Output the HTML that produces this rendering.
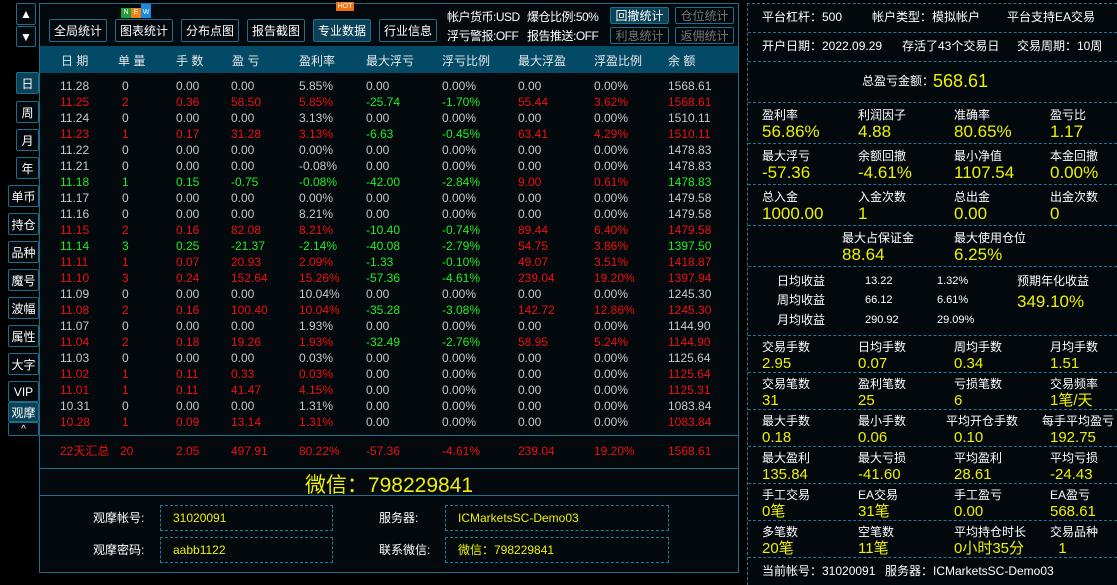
<!DOCTYPE html>
<html><head><meta charset="utf-8"><style>
*{margin:0;padding:0;box-sizing:border-box}
body{width:1117px;height:585px;background:#000;overflow:hidden;position:relative;font-family:"Liberation Sans","Noto Sans CJK SC",sans-serif;font-size:12px;color:#fff}
.a{position:absolute;white-space:nowrap}
.btn{position:absolute;border:1px solid #1a6f8c;border-radius:2px;background:#02080c;color:#fff;font-size:12px;display:flex;align-items:center;justify-content:center;white-space:nowrap}
.hl{background:#0b4258}
.dim{color:#777}
.g{color:#c8c8c8}.r{color:#ee1010}.gr{color:#22ee22}.y{color:#eef000}
.row{position:absolute;left:40px;height:16px;line-height:16px;font-size:12px;width:698px}
.row span{position:absolute;top:0;white-space:nowrap}
.hd{position:absolute;left:40px;top:46px;width:698px;height:27px;background:#034a66}
.hd span{position:absolute;top:6px;font-size:12px;color:#e8e8e8;white-space:nowrap}
.dl{position:absolute;left:748px;width:369px;border-top:1px dashed #1a7a9a}
.lb{position:absolute;font-size:12px;line-height:14px;color:#fff;white-space:nowrap}
.vl{position:absolute;font-size:16px;line-height:17px;color:#eef000;white-space:nowrap}
.box{position:absolute;border:1px dashed #1a7a9a;height:26px;line-height:24px;padding-left:12px;color:#eef000;font-size:12px;white-space:nowrap}
</style></head><body>
<div class="btn" style="left:16px;top:3px;width:20px;height:22px">▲</div>
<div class="btn" style="left:16px;top:26px;width:20px;height:21px">▼</div>
<div class="btn hl" style="left:16px;top:72px;width:23px;height:22px">日</div>
<div class="btn" style="left:16px;top:101px;width:23px;height:22px">周</div>
<div class="btn" style="left:16px;top:129px;width:23px;height:22px">月</div>
<div class="btn" style="left:16px;top:157px;width:23px;height:22px">年</div>
<div class="btn" style="left:8px;top:185px;width:31px;height:22px">单币</div>
<div class="btn" style="left:8px;top:213px;width:31px;height:22px">持仓</div>
<div class="btn" style="left:8px;top:241px;width:31px;height:22px">品种</div>
<div class="btn" style="left:8px;top:269px;width:31px;height:22px">魔号</div>
<div class="btn" style="left:8px;top:297px;width:31px;height:22px">波幅</div>
<div class="btn" style="left:8px;top:325px;width:31px;height:22px">属性</div>
<div class="btn" style="left:8px;top:353px;width:31px;height:22px">大字</div>
<div class="btn" style="left:8px;top:381px;width:31px;height:21px">VIP</div>
<div class="btn hl" style="left:8px;top:402px;width:31px;height:20px">观摩</div>
<div class="btn" style="left:8px;top:422px;width:31px;height:14px;font-size:10px">^</div>
<div class="a" style="left:39px;top:3px;width:700px;height:570px;border:1px solid #1a6f8c;background:#03090c"></div>
<div class="btn" style="left:49px;top:19px;width:58px;height:23px">全局统计</div>
<div class="btn" style="left:115px;top:19px;width:58px;height:23px">图表统计</div>
<div class="a" style="left:121px;top:8px;width:10px;height:10px;background:#1ea03c;font-size:7px;text-align:center;line-height:10px">N</div>
<div class="a" style="left:131px;top:8px;width:10px;height:10px;background:#f08010;font-size:7px;text-align:center;line-height:10px">E</div>
<div class="a" style="left:141px;top:4px;width:10px;height:14px;background:#1a8ae0;font-size:7px;text-align:center;line-height:18px">W</div>
<div class="btn" style="left:181px;top:19px;width:58px;height:23px">分布点图</div>
<div class="btn" style="left:247px;top:19px;width:58px;height:23px">报告截图</div>
<div class="btn hl" style="left:313px;top:19px;width:58px;height:23px">专业数据</div>
<div class="a" style="left:336px;top:2px;width:18px;height:9px;background:#f07010;font-size:7px;color:#fff;text-align:center;line-height:9px">HOT</div>
<div class="btn" style="left:379px;top:19px;width:58px;height:23px">行业信息</div>
<div class="a" style="left:447px;top:8px;font-size:12px;letter-spacing:-0.5px">帐户货币:USD</div>
<div class="a" style="left:527px;top:8px;font-size:12px;letter-spacing:-0.5px">爆仓比例:50%</div>
<div class="a" style="left:447px;top:27px;font-size:12px;letter-spacing:-0.5px">浮亏警报:OFF</div>
<div class="a" style="left:527px;top:27px;font-size:12px;letter-spacing:-0.5px">报告推送:OFF</div>
<div class="btn hl" style="left:610px;top:7px;width:59px;height:17px">回撤统计</div>
<div class="btn dim" style="left:675px;top:7px;width:59px;height:17px">仓位统计</div>
<div class="btn dim" style="left:610px;top:27px;width:59px;height:17px">利息统计</div>
<div class="btn dim" style="left:675px;top:27px;width:59px;height:17px">返佣统计</div>
<div class="hd"><span style="left:21px">日 期</span><span style="left:78px">单 量</span><span style="left:136px">手 数</span><span style="left:192px">盈 亏</span><span style="left:259px">盈利率</span><span style="left:326px">最大浮亏</span><span style="left:402px">浮亏比例</span><span style="left:478px">最大浮盈</span><span style="left:554px">浮盈比例</span><span style="left:628px">余 额</span></div>
<div id="rows"></div>
<div class="a" style="left:40px;top:435px;width:698px;border-top:1px solid #1a6f8c"></div>
<div class="row r" style="top:443px"><span style="left:20px">22天汇总</span><span style="left:80px">20</span><span style="left:136px">2.05</span><span style="left:191px">497.91</span><span style="left:259px">80.22%</span><span style="left:326px">-57.36</span><span style="left:402px">-4.61%</span><span style="left:478px">239.04</span><span style="left:554px">19.20%</span><span style="left:628px">1568.61</span></div>
<div class="a" style="left:40px;top:468px;width:698px;border-top:1px solid #1a6f8c"></div>
<div class="a y" style="left:40px;width:698px;top:469px;text-align:center;font-size:21px">微信：798229841</div>
<div class="a" style="left:40px;top:495px;width:698px;border-top:1px solid #1a6f8c"></div>
<div class="lb" style="left:93px;top:511px">观摩帐号:</div>
<div class="box" style="left:160px;top:505px;width:173px">31020091</div>
<div class="lb" style="left:93px;top:543px">观摩密码:</div>
<div class="box" style="left:160px;top:537px;width:173px">aabb1122</div>
<div class="lb" style="left:379px;top:511px">服务器:</div>
<div class="box" style="left:445px;top:505px;width:224px">ICMarketsSC-Demo03</div>
<div class="lb" style="left:379px;top:543px">联系微信:</div>
<div class="box" style="left:445px;top:537px;width:224px">微信：798229841</div>
<div class="a" style="left:747px;top:3px;width:370px;height:582px;border-left:1px dashed #1a7a9a;border-top:1px dashed #1a7a9a;background:#02080c"></div>
<div class="lb" style="left:762px;top:10px">平台杠杆：500</div>
<div class="lb" style="left:872px;top:10px">帐户类型：模拟帐户</div>
<div class="lb" style="left:1007px;top:10px">平台支持EA交易</div>
<div class="dl" style="top:32px"></div>
<div class="lb" style="left:762px;top:39px">开户日期：2022.09.29</div>
<div class="lb" style="left:902px;top:39px">存活了43个交易日</div>
<div class="lb" style="left:1017px;top:39px">交易周期：10周</div>
<div class="dl" style="top:61px"></div>
<div class="lb" style="left:862px;top:74px">总盈亏金额：</div>
<div class="vl" style="left:933px;top:71px;font-size:18px;line-height:20px">568.61</div>
<div class="dl" style="top:102px"></div>
<div id="grid"></div>
<div class="lb" style="left:777px;top:274px">日均收益</div><div class="lb" style="left:865px;top:274px;font-size:11px">13.22</div><div class="lb" style="left:937px;top:274px;font-size:11px">1.32%</div><div class="lb" style="left:1017px;top:274px">预期年化收益</div>
<div class="lb" style="left:777px;top:293px">周均收益</div><div class="lb" style="left:865px;top:293px;font-size:11px">66.12</div><div class="lb" style="left:937px;top:293px;font-size:11px">6.61%</div>
<div class="vl" style="left:1017px;top:293px;font-size:17px">349.10%</div>
<div class="lb" style="left:777px;top:313px">月均收益</div><div class="lb" style="left:865px;top:313px;font-size:11px">290.92</div><div class="lb" style="left:937px;top:313px;font-size:11px">29.09%</div>
<div class="lb" style="left:762px;top:564px">当前帐号：31020091</div>
<div class="lb" style="left:885px;top:564px">服务器：ICMarketsSC-Demo03</div>
<script>
var D=[
["11.28","0","0.00","0.00","5.85%","0.00","0.00%","0.00","0.00%","1568.61","g"],
["11.25","2","0.36","58.50","5.85%","-25.74","-1.70%","55.44","3.62%","1568.61","r"],
["11.24","0","0.00","0.00","3.13%","0.00","0.00%","0.00","0.00%","1510.11","g"],
["11.23","1","0.17","31.28","3.13%","-6.63","-0.45%","63.41","4.29%","1510.11","r"],
["11.22","0","0.00","0.00","0.00%","0.00","0.00%","0.00","0.00%","1478.83","g"],
["11.21","0","0.00","0.00","-0.08%","0.00","0.00%","0.00","0.00%","1478.83","g"],
["11.18","1","0.15","-0.75","-0.08%","-42.00","-2.84%","9.00","0.61%","1478.83","gr"],
["11.17","0","0.00","0.00","0.00%","0.00","0.00%","0.00","0.00%","1479.58","g"],
["11.16","0","0.00","0.00","8.21%","0.00","0.00%","0.00","0.00%","1479.58","g"],
["11.15","2","0.16","82.08","8.21%","-10.40","-0.74%","89.44","6.40%","1479.58","r"],
["11.14","3","0.25","-21.37","-2.14%","-40.08","-2.79%","54.75","3.86%","1397.50","gr"],
["11.11","1","0.07","20.93","2.09%","-1.33","-0.10%","49.07","3.51%","1418.87","r"],
["11.10","3","0.24","152.64","15.26%","-57.36","-4.61%","239.04","19.20%","1397.94","r"],
["11.09","0","0.00","0.00","10.04%","0.00","0.00%","0.00","0.00%","1245.30","g"],
["11.08","2","0.16","100.40","10.04%","-35.28","-3.08%","142.72","12.86%","1245.30","r"],
["11.07","0","0.00","0.00","1.93%","0.00","0.00%","0.00","0.00%","1144.90","g"],
["11.04","2","0.18","19.26","1.93%","-32.49","-2.76%","58.95","5.24%","1144.90","r"],
["11.03","0","0.00","0.00","0.03%","0.00","0.00%","0.00","0.00%","1125.64","g"],
["11.02","1","0.11","0.33","0.03%","0.00","0.00%","0.00","0.00%","1125.64","r"],
["11.01","1","0.11","41.47","4.15%","0.00","0.00%","0.00","0.00%","1125.31","r"],
["10.31","0","0.00","0.00","1.31%","0.00","0.00%","0.00","0.00%","1083.84","g"],
["10.28","1","0.09","13.14","1.31%","0.00","0.00%","0.00","0.00%","1083.84","r"]];
var X=[20,82,136,191,259,326,402,478,554,628],h="";
D.forEach(function(r,i){var c=r[10];h+='<div class="row" style="top:'+(78+i*16)+'px">';
for(var j=0;j<10;j++){var k=c;if(c!="g"){if(j==5||j==6)k=(r[j]=="0.00"||r[j]=="0.00%")?"g":"gr";if(j==7||j==8)k=(r[j]=="0.00"||r[j]=="0.00%")?"g":"r";}
h+='<span class="'+k+'" style="left:'+X[j]+'px">'+r[j]+'</span>';}h+='</div>';});
document.getElementById('rows').innerHTML=h;
var G=[[108,[["盈利率","56.86%"],["利润因子","4.88"],["准确率","80.65%"],["盈亏比","1.17"]],1],
[149,[["最大浮亏","-57.36"],["余额回撤","-4.61%"],["最小净值","1107.54"],["本金回撤","0.00%"]],1],
[190,[["总入金","1000.00"],["入金次数","1"],["总出金","0.00"],["出金次数","0"]],1],
[231,[null,["最大占保证金","88.64"],["最大使用仓位","6.25%"],null],1,1],
[340,[["交易手数","2.95"],["日均手数","0.07"],["周均手数","0.34"],["月均手数","1.51"]],0],
[377,[["交易笔数","31"],["盈利笔数","25"],["亏损笔数","6"],["交易频率","1笔/天"]],0],
[414,[["最大手数","0.18"],["最小手数","0.06"],["平均开仓手数","0.10"],["每手平均盈亏","192.75"]],0],
[451,[["最大盈利","135.84"],["最大亏损","-41.60"],["平均盈利","28.61"],["平均亏损","-24.43"]],0],
[488,[["手工交易","0笔"],["EA交易","31笔"],["手工盈亏","0.00"],["EA盈亏","568.61"]],0],
[525,[["多笔数","20笔"],["空笔数","11笔"],["平均持仓时长","0小时35分"],["交易品种","  1"]],0]];
var GX=[762,858,954,1050],s="";
G.forEach(function(g){var big=g[2];var xs=g[3]?[0,842,954,0]:GX;
g[1].forEach(function(c,i){if(!c)return;var x=xs[i];var vx=x;
if(c[0]=="每手平均盈亏"){x=1042;vx=1050;}if(c[0]=="平均开仓手数"){x=946;vx=954;}
s+='<div class="lb" style="left:'+x+'px;top:'+g[0]+'px">'+c[0]+'</div>';
s+='<div class="vl" style="left:'+vx+'px;top:'+(g[0]+(big?15:15))+'px;font-size:'+(big?17:15)+'px">'+c[1].replace(/ /g,'&nbsp;')+'</div>';});});
[143,184,225,266,335,372,409,446,483,520,557].forEach(function(y){s+='<div class="dl" style="top:'+y+'px"></div>';});
document.getElementById('grid').innerHTML=s;
</script>
</body></html>
